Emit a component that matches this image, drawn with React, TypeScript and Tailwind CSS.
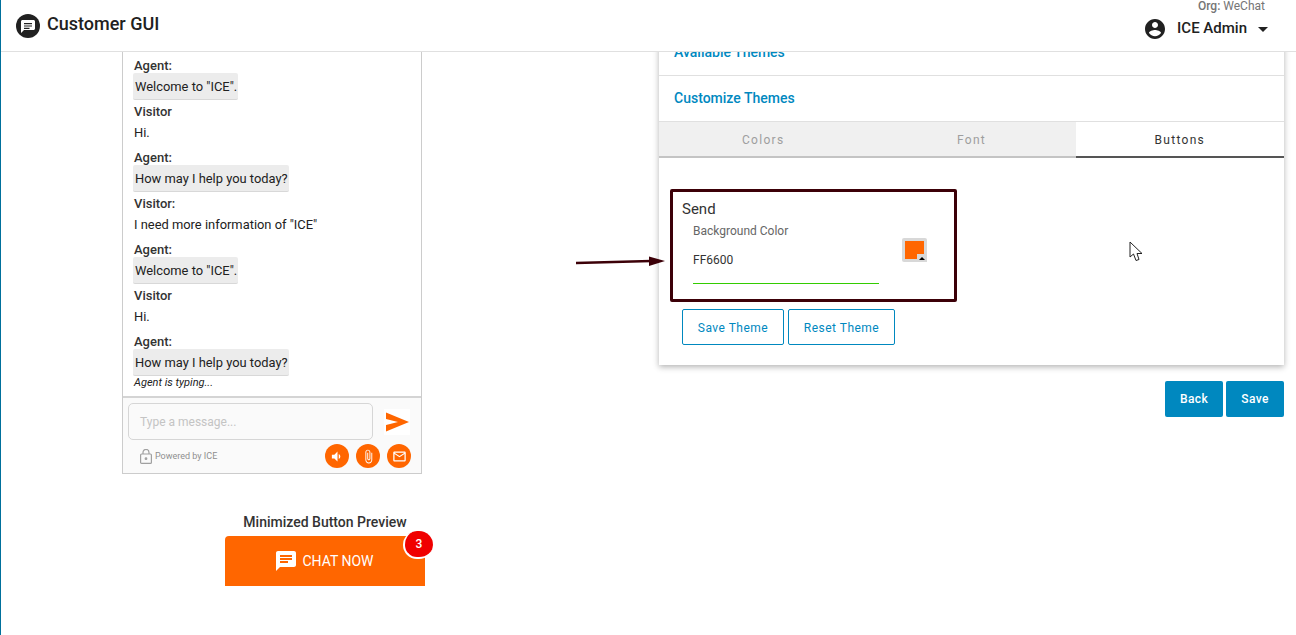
const MESSAGES = [
  { who: "Agent:", text: 'Welcome to "ICE".', agent: true },
  { who: "Visitor", text: "Hi.", agent: false },
  { who: "Agent:", text: "How may I help you today?", agent: true },
  { who: "Visitor:", text: 'I need more information of "ICE"', agent: false },
  { who: "Agent:", text: 'Welcome to "ICE".', agent: true },
  { who: "Visitor", text: "Hi.", agent: false },
  { who: "Agent:", text: "How may I help you today?", agent: true },
];

function Header() {
  return (
    <header className="h-[52px] shrink-0 border-b border-[#e0e0e0] bg-white flex items-center justify-between pl-[15px] pr-[27px] relative z-10">
      <div className="flex items-center gap-[7px]">
        <svg width="24" height="24" viewBox="0 0 24 24" className="text-[#212121]">
          <circle cx="12" cy="12" r="12" fill="currentColor" />
          <path fill="#fff" d="M17.500 6h-11C5.700 6 5 6.700 5 7.500V19l3-3h9.500c.8 0 1.500-.7 1.500-1.500v-7C19 6.700 18.300 6 17.500 6zM8 9h8v1.200H8zm0 2.400h8v1.200H8zm0 2.400h5.500V15H8z" />
        </svg>
        <span className="text-[18px] font-medium text-[#212121] mb-[4px]">Customer GUI</span>
      </div>
      <div className="flex flex-col items-end -mt-[10px]">
        <div className="text-[12px] leading-[12px] text-[#757575] mr-[4px]"><span className="font-medium">Org:</span> WeChat</div>
        <div className="flex items-center mt-[5px]">
          <svg width="24" height="24" viewBox="0 0 24 24" fill="#212121">
            <path d="M12 2C6.480 2 2 6.480 2 12s4.480 10 10 10 10-4.480 10-10S17.520 2 12 2zm0 3c1.660 0 3 1.340 3 3s-1.340 3-3 3-3-1.340-3-3 1.340-3 3-3zm0 14.200c-2.500 0-4.710-1.280-6-3.220.03-1.990 4-3.080 6-3.080 1.990 0 5.970 1.090 6 3.080-1.290 1.940-3.500 3.220-6 3.220z" />
          </svg>
          <span className="text-[15px] leading-[18px] mb-[2px] font-medium text-[#212121] ml-[10px]">ICE Admin</span>
          <svg width="24" height="24" viewBox="0 0 24 24" fill="#212121" className="ml-[4px] -mr-[6px]"><path d="M7 10l5 5 5-5z" /></svg>
        </div>
      </div>
    </header>
  );
}

function RoundIcon({ d }: { d: string }) {
  return (
    <span className="w-6 h-6 rounded-full bg-[#ff6600] flex items-center justify-center">
      <svg width="15" height="15" viewBox="0 0 24 24" fill="#fff"><path d={d} /></svg>
    </span>
  );
}

function ChatPreview() {
  return (
    <div className="w-[300px] border-x border-b border-[#cccccc] bg-white">
      <div className="pl-[11px] pt-[6px] flex flex-col gap-[4px]">
        {MESSAGES.map((m, i) => (
          <div key={i} className="flex flex-col items-start">
            <div className="text-[13px] leading-[15px] font-medium text-[#333333]">{m.who}</div>
            <div className={"text-[12.9px] leading-[27px] h-[27px] text-[#212121] " + (m.agent ? "bg-[#ececec] rounded-[2px] border-b border-[#d8d8d8] -ml-[1px] pl-[2px] pr-[1px]" : "")}>{m.text}</div>
          </div>
        ))}
      </div>
      <div className="pl-[11px] text-[11px] leading-[13px] italic text-[#212121] pb-[7px]">Agent is typing...</div>
      <div className="bg-[#fafafa] border-t-2 border-[#d4d4d4] h-[77px] px-[5px] pt-[5px]">
        <div className="flex items-center">
          <div className="w-[245px] h-[37px] border border-[#d6d6d6] rounded-[5px] px-[11px] flex items-center text-[12px] text-[#c4c4c4]">Type a message...</div>
          <svg width="26" height="26" viewBox="0 0 26 26" className="ml-[11px] bg-white"><path fill="#ff6600" d="M2 3.500L25 13 2 22.500V16l12-3-12-3z" /></svg>
        </div>
        <div className="flex items-center mt-[4px]">
          <svg width="12" height="15" viewBox="0 0 12 15" fill="none" stroke="#a0a0a0" strokeWidth="1.200" className="ml-[12px]">
            <rect x="0.600" y="5" width="10.800" height="9.400" rx="1" />
            <path d="M3 5V3.400a3 3 0 0 1 6 0V5" />
            <circle cx="6" cy="9.700" r="0.800" fill="#a0a0a0" />
          </svg>
          <span className="text-[9px] text-[#8f8f8f] ml-[3px] pt-[1px]">Powered by ICE</span>
          <div className="ml-auto mr-[5px] flex gap-[7px]">
            <RoundIcon d="M3 9v6h4l5 5V4L7 9H3zm13.500 3c0-1.770-1.020-3.290-2.500-4.030v8.050c1.480-.73 2.500-2.250 2.500-4.020z" />
            <RoundIcon d="M16.500 6v11.500c0 2.210-1.790 4-4 4s-4-1.790-4-4V5c0-1.380 1.120-2.500 2.500-2.500s2.500 1.120 2.500 2.500v10.500c0 .55-.45 1-1 1s-1-.45-1-1V6H10v9.500c0 1.380 1.120 2.500 2.500 2.500s2.500-1.120 2.500-2.500V5c0-2.210-1.790-4-4-4S7 2.790 7 5v12.500c0 3.040 2.460 5.500 5.500 5.500s5.500-2.460 5.500-5.500V6h-1.500z" />
            <RoundIcon d="M20 4H4c-1.100 0-2 .9-2 2v12c0 1.100.9 2 2 2h16c1.100 0 2-.9 2-2V6c0-1.100-.9-2-2-2zm0 14H4V8l8 5 8-5v10zm-8-7L4 6h16l-8 5z" />
          </div>
        </div>
      </div>
    </div>
  );
}

function MinimizedPreview() {
  return (
    <div className="w-[200px] ml-[103px] mt-[40px]">
      <div className="text-[14px] leading-[16px] font-medium text-[#333333] text-center whitespace-nowrap">Minimized Button Preview</div>
      <div className="relative mt-[6px] h-[50px] bg-[#ff6600] rounded-t-[4px] flex items-center justify-center text-white text-[14px]">
        <svg width="24" height="24" viewBox="0 0 24 24" fill="#fff" className="mr-[4px] -ml-[2px]">
          <path d="M20 2H4c-1.100 0-2 .9-2 2v18l4-4h14c1.100 0 2-.9 2-2V4c0-1.100-.9-2-2-2zM6 9h12v2H6zm8 5H6v-2h8zm4-6H6V6h12z" />
        </svg>
        CHAT NOW
        <span className="absolute -right-[8px] -top-[5px] w-[30px] h-[28px] rounded-full bg-[#f00000] border-l-2 border-b-2 border-white flex items-center justify-center text-[12px] font-medium">3</span>
      </div>
    </div>
  );
}

function ThemePanel() {
  return (
    <div className="w-[625px] bg-white shadow-[0_2px_6px_rgba(0,0,0,0.3)]">
      <div className="h-[46px] border-b border-[#e0e0e0] pl-[15px] pt-[14px] text-[14px] leading-[16px] font-medium text-[#0088bf]">Available Themes</div>
      <div className="h-[46px] border-b border-[#e0e0e0] pl-[15px] flex items-center text-[14px] font-medium text-[#0088bf]">Customize Themes</div>
      <div className="grid grid-cols-3 h-[36px] text-[12px] tracking-[1.3px]">
        <div className="bg-[#f0f0f0] border-b-2 border-[#c4c4c4] pt-[2px] flex items-center justify-center text-[#9e9e9e]">Colors</div>
        <div className="bg-[#f0f0f0] border-b-2 border-[#c4c4c4] pt-[2px] flex items-center justify-center text-[#9e9e9e]">Font</div>
        <div className="bg-white border-b-2 border-[#555555] pt-[2px] flex items-center justify-center text-[#333333]">Buttons</div>
      </div>
      <div className="pl-[11px] pt-[31px] pb-[20px]">
        <div className="w-[287px] h-[113px] border-[3px] border-[#3c0008] rounded-[2px] pl-[9px] pt-[7px] relative">
          <div className="text-[15px] leading-[20px] text-[#333333]">Send</div>
          <div className="pl-[11px] flex">
            <div className="w-[186px]">
              <div className="text-[12px] leading-[14px] text-[#666666] mt-[5px]">Background Color</div>
              <div className="text-[12px] leading-[14px] text-[#333333] mt-[15px]">FF6600</div>
              <div className="h-px bg-[#33cc00] mt-[16px]" />
            </div>
            <div className="w-[25px] h-[24px] ml-[23px] mt-[19px] bg-[#d8d8d8] rounded-[2px] p-[3px] relative">
              <div className="h-full bg-[#ff6600]" />
              <span className="absolute right-0 bottom-0 w-[10px] h-[8px] bg-[#d8d8d8] flex items-center justify-center">
                <span className="border-x-[3px] border-x-transparent border-b-[3px] border-b-black" />
              </span>
            </div>
          </div>
        </div>
        <div className="flex gap-[4px] mt-[7px] ml-[12px] text-[12px] tracking-[0.5px] text-[#0088bf]">
          <div className="w-[102px] h-[36px] border border-[#0088bf] rounded-[2px] pt-[2px] flex items-center justify-center">Save Theme</div>
          <div className="w-[107px] h-[36px] border border-[#0088bf] rounded-[2px] pt-[2px] flex items-center justify-center">Reset Theme</div>
        </div>
      </div>
    </div>
  );
}

export default function App() {
  return (
    <div className="relative h-[635px] w-[1296px] overflow-hidden bg-white border-l border-[#00709c] flex flex-col" style={{ fontFamily: "Roboto, sans-serif" }}>
      <Header />
      <main className="flex-1 overflow-hidden pl-[121px] pr-[12px] flex justify-between">
        <div>
          <ChatPreview />
          <MinimizedPreview />
        </div>
        <div className="-mt-[22px]">
          <ThemePanel />
          <div className="flex justify-end gap-[3px] mt-[16px] text-[12px] font-medium tracking-[0.4px] text-white">
            <div className="w-[58px] h-[36px] rounded-[2px] bg-[#0088bf] flex items-center justify-center">Back</div>
            <div className="w-[58px] h-[36px] rounded-[2px] bg-[#0088bf] flex items-center justify-center">Save</div>
          </div>
        </div>
      </main>
      {/* screenshot annotation and mouse pointer */}
      <svg width="92" height="12" viewBox="0 0 92 12" className="absolute left-[574px] top-[255px]">
        <path d="M1 8 L76 6" stroke="#3c0008" strokeWidth="2.500" />
        <path d="M74 1.500 L90 6 L74 11z" fill="#3c0008" />
      </svg>
      <svg width="15" height="21" viewBox="0 0 15 21" className="absolute left-[1128px] top-[241px]">
        <path d="M1 1 L1 16 L4.500 13 L7 19.500 L10 18.500 L8 12.500 L13 12.500 Z" fill="#fff" stroke="#222" strokeWidth="1" />
      </svg>
    </div>
  );
}
